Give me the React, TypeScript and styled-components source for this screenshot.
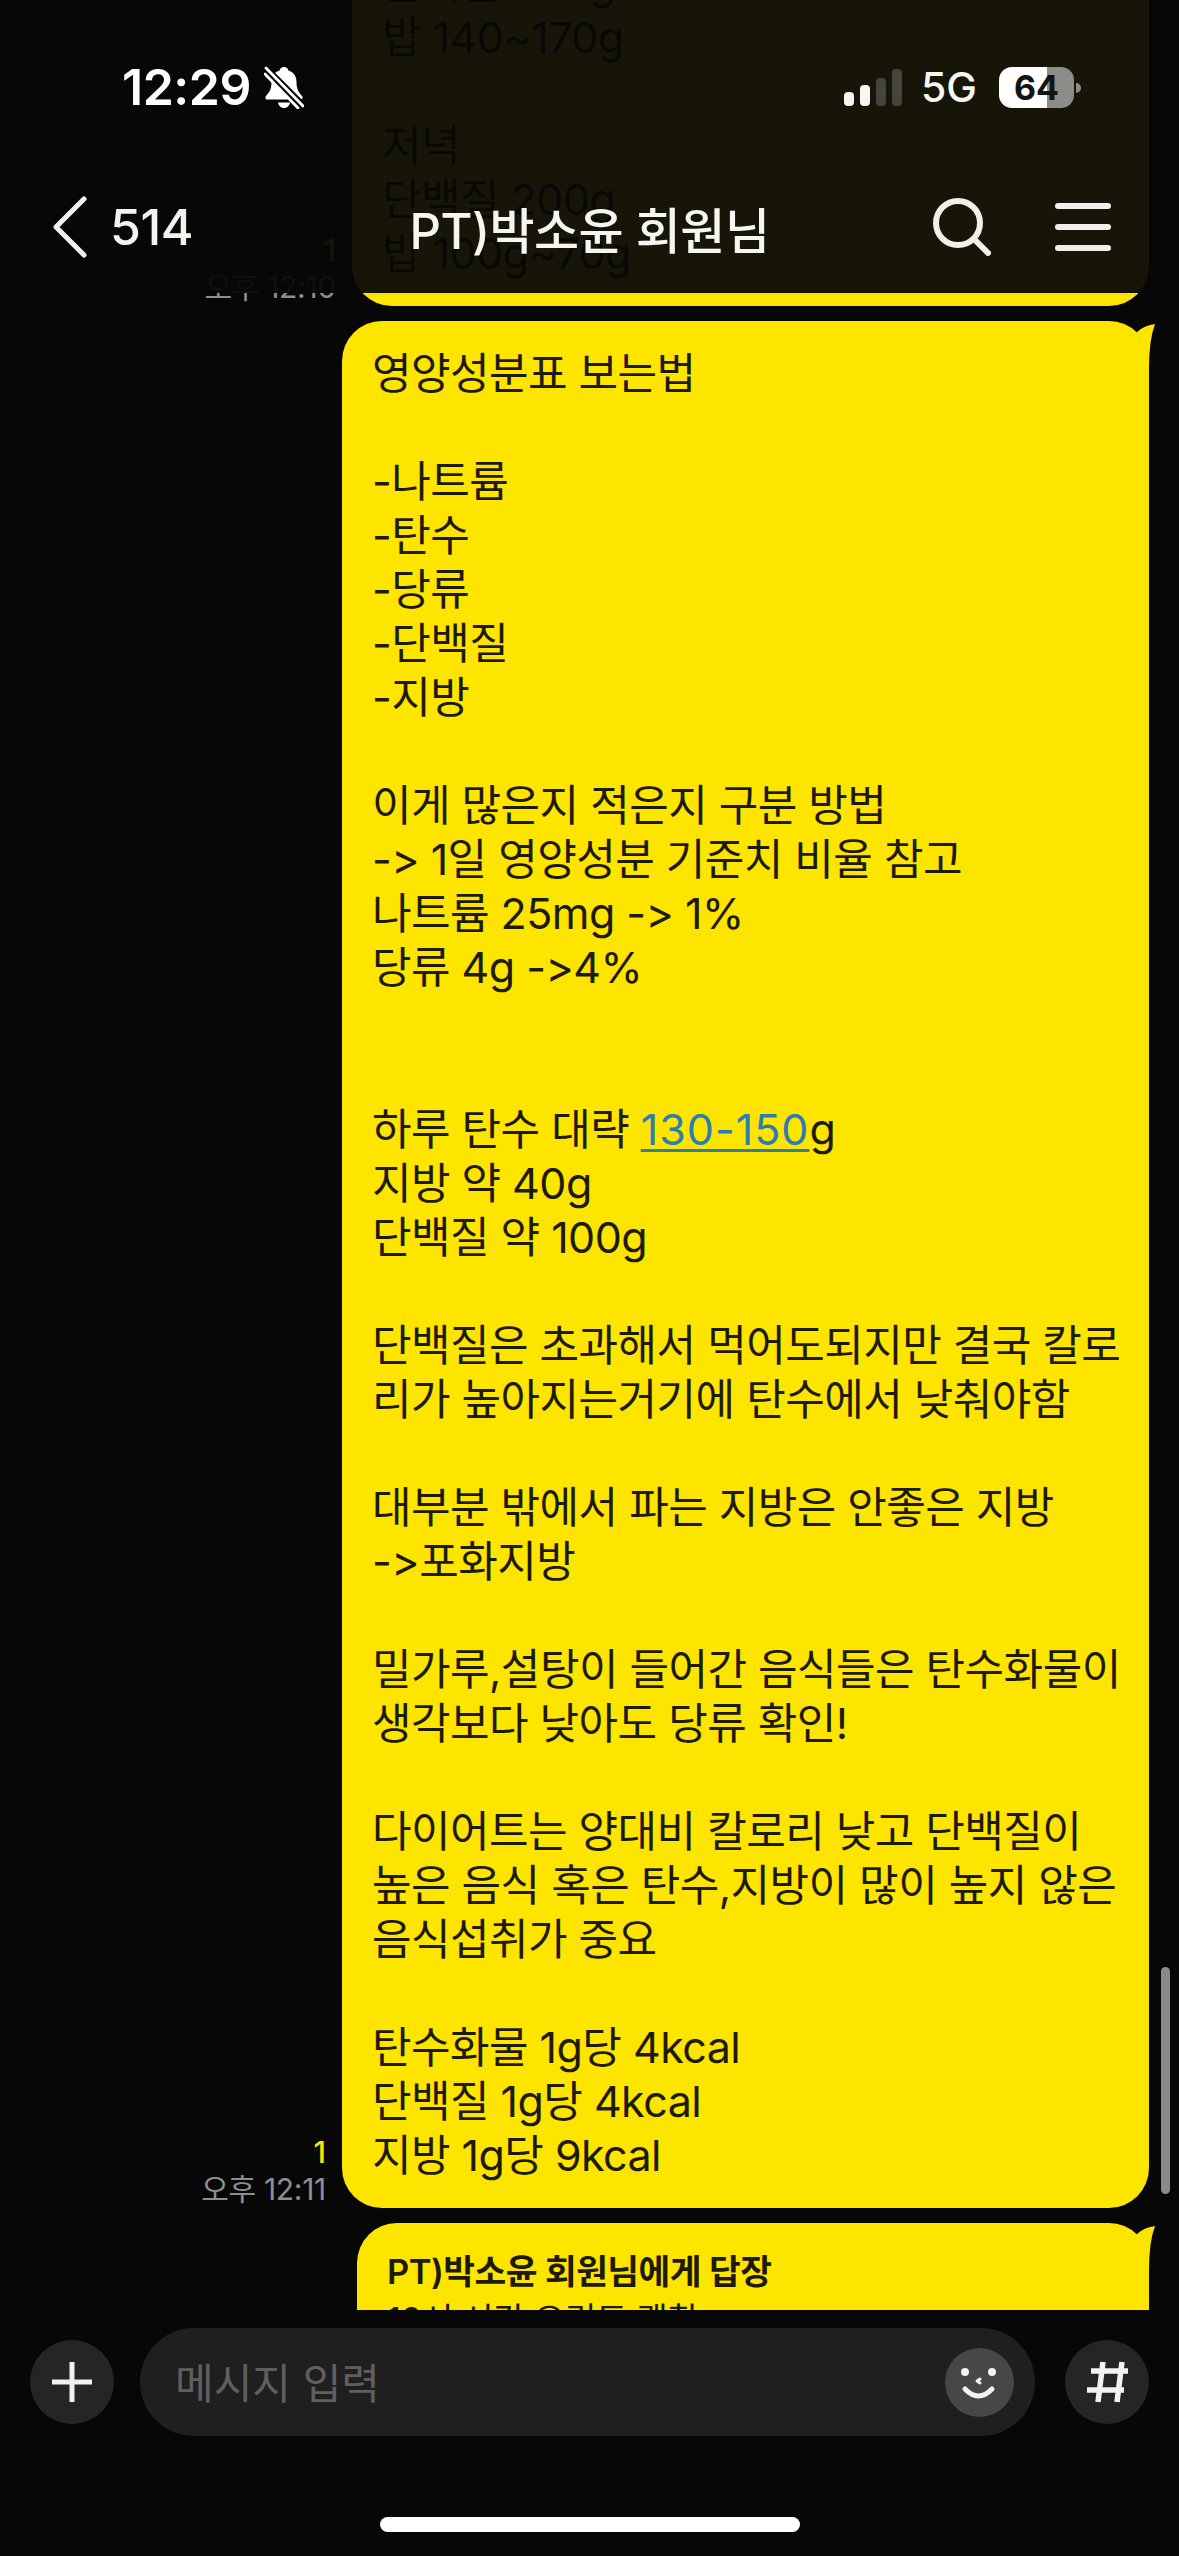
import React from 'react';
import styled, { createGlobalStyle } from 'styled-components';

const GlobalStyle = createGlobalStyle`
  html, body { margin: 0; padding: 0; background: #070707; }
  body {
    font-family: Inter, "Noto Sans CJK KR", sans-serif;
    font-feature-settings: "calt" 0;
  }
`;

const Page = styled.div`
  position: relative;
  width: 1179px;
  height: 2556px;
  overflow: hidden;
  display: flex;
  flex-direction: column;
  background: #070707;
`;

/* ---- top bar, lies over the scrolled messages ---- */
const TopOverlay = styled.header`
  position: absolute;
  top: 0;
  left: 0;
  right: 0;
  height: 293px;
  padding-top: 57px;
  box-sizing: border-box;
  background: rgba(7, 7, 7, 0.94);
  z-index: 5;
`;

const StatusBar = styled.div`
  display: flex;
  align-items: center;
  justify-content: space-between;
  height: 60px;
  padding: 0 105px 0 122px;
`;

const StatusLeft = styled.div`
  display: flex;
  align-items: center;
  gap: 13px;
`;

const Clock = styled.span`
  font-size: 50px;
  font-weight: 600;
  color: #fff;
  letter-spacing: -0.5px;
`;

const StatusRight = styled.div`
  display: flex;
  align-items: center;
`;

const SignalBars = styled.div`
  display: flex;
  align-items: flex-end;
  gap: 6px;
  height: 37px;
  margin-right: 19px;
`;

const SignalBar = styled.div<{ $h: number; $on?: boolean }>`
  width: 10px;
  height: ${p => p.$h}px;
  border-radius: 4px;
  background: ${p => (p.$on ? '#f5f5f2' : '#45453e')};
`;

const Network = styled.span`
  font-size: 41px;
  font-weight: 500;
  color: #f5f5f2;
  margin-right: 22px;
`;

const Battery = styled.div`
  position: relative;
  width: 75px;
  height: 41px;
  border-radius: 13px;
  background: linear-gradient(to right, #fff 0, #fff 48px, #8c8c88 48px);
  display: flex;
  align-items: center;
  justify-content: center;
  font-size: 34px;
  font-weight: 700;
  color: #141414;

  &::after {
    content: '';
    position: absolute;
    right: -7px;
    top: 16px;
    width: 5px;
    height: 10px;
    border-radius: 0 5px 5px 0;
    background: #8c8c88;
  }
`;

const NavBar = styled.nav`
  display: grid;
  grid-template-columns: 1fr auto 1fr;
  align-items: center;
  height: 80px;
  margin-top: 70px;
  padding: 0 68px;
  color: #f2f2ee;
`;

const BackGroup = styled.div`
  display: flex;
  align-items: center;
  gap: 23px;
  margin-left: -15px;
`;

const BackCount = styled.span`
  font-size: 50px;
  font-weight: 500;
  letter-spacing: -0.5px;
`;

const RoomTitle = styled.h1`
  margin: 0;
  font-size: 49px;
  font-weight: 500;
  color: #f5f5f2;
  white-space: nowrap;
  letter-spacing: -0.5px;
`;

const NavActions = styled.div`
  display: flex;
  align-items: center;
  justify-content: flex-end;
  gap: 64px;
`;

const MenuButton = styled.div`
  display: flex;
  flex-direction: column;
  gap: 15px;
  width: 56px;
`;

const MenuLine = styled.span`
  display: block;
  height: 6px;
  border-radius: 3px;
  background: #f0efea;
`;

/* ---- messages ---- */
const Feed = styled.main`
  position: relative;
  flex: none;
  height: 2310px;
  overflow: hidden;
  display: flex;
  flex-direction: column;
  gap: 15px;
  padding-right: 30px;
  box-sizing: border-box;
`;

const MessageRow = styled.div<{ $offset?: number }>`
  flex: none;
  display: flex;
  justify-content: flex-end;
  align-items: flex-end;
  gap: 16px;
  margin-top: ${p => p.$offset ?? 0}px;
`;

const Meta = styled.div`
  display: flex;
  flex-direction: column;
  align-items: flex-end;
`;

const Unread = styled.span`
  font-size: 30px;
  line-height: 36px;
  font-weight: 500;
  color: #fee500;
`;

const SentAt = styled.span`
  font-size: 30px;
  line-height: 38px;
  letter-spacing: -0.3px;
  color: #8e8e8e;
  white-space: nowrap;
`;

const Bubble = styled.div<{ $width: number }>`
  position: relative;
  flex: none;
  width: ${p => p.$width}px;
  box-sizing: border-box;
  padding: 25px 0 26px 30px;
  border-radius: 40px;
  background: #fee500;
  color: #1e1b04;
  font-size: 43px;
  line-height: 54px;
  letter-spacing: -0.55px;
  white-space: pre;
`;

const Tail = styled.svg`
  position: absolute;
  top: 3px;
  right: -6px;
  width: 18px;
  height: 44px;
`;

const PhoneLink = styled.span`
  color: #2a7fb0;
  letter-spacing: 1px;
  text-decoration: underline;
  text-decoration-thickness: 3px;
  text-underline-offset: 4px;
`;

const ReplyHeading = styled.div`
  font-size: 34.5px;
  line-height: 48px;
  font-weight: 600;
`;

const ReplyBody = styled.div`
  font-size: 34.5px;
  line-height: 48px;
`;

const ScrollThumb = styled.div`
  position: absolute;
  left: 1161px;
  top: 1967px;
  width: 9px;
  height: 227px;
  border-radius: 5px;
  background: #8a8a8a;
`;

/* ---- composer ---- */
const ComposerBar = styled.footer`
  flex: 1;
  display: flex;
  flex-direction: column;
  align-items: center;
  padding-top: 18px;
`;

const ComposerRow = styled.div`
  align-self: stretch;
  display: flex;
  align-items: center;
  padding: 0 30px;
`;

const RoundButton = styled.div`
  flex: none;
  width: 84px;
  height: 84px;
  border-radius: 50%;
  background: #252525;
  display: flex;
  align-items: center;
  justify-content: center;
`;

const InputField = styled.div`
  flex: 1;
  height: 108px;
  margin: 0 30px 0 26px;
  padding: 0 21px 0 35px;
  border-radius: 54px;
  background: #1f1f1f;
  display: flex;
  align-items: center;
  justify-content: space-between;
`;

const Placeholder = styled.span`
  font-size: 42px;
  color: #5f5f5f;
  margin-bottom: 4px;
`;

const EmojiButton = styled.div`
  width: 69px;
  height: 69px;
  border-radius: 50%;
  background: #474747;
`;

const HomeIndicator = styled.div`
  width: 420px;
  height: 15px;
  margin-top: 81px;
  border-radius: 8px;
  background: #fff;
`;

const BellOff = () => (
  <svg width="40" height="43" viewBox="0 0 40 43">
    <path d="M20 1c2.5 0 4 1.6 4.400 3.400C30 6 32.500 10.500 32.500 16c0 7 2 10 5.500 14 1.300 1.500.5 3.500-1.500 3.500H3.500C1.500 33.500.7 31.500 2 30c3.500-4 5.500-7 5.500-14C7.500 10.500 10 6 15.600 4.400 16 2.600 17.500 1 20 1z" fill="#fff" />
    <path d="M14 36.500h12c-.6 3.300-3 5.500-6 5.500s-5.400-2.200-6-5.500z" fill="#fff" />
    <path d="M1 3l38 38" stroke="#070707" strokeWidth="9" />
    <path d="M2 2l37 38M1 8l33 34" stroke="#fff" strokeWidth="2.800" strokeLinecap="round" />
  </svg>
);

const BubbleTail = () => (
  <Tail viewBox="0 0 18 44">
    <path d="M0 8Q8 1 18 0 12 16 12 44H0Z" fill="#fee500" />
  </Tail>
);

const signal = [
  { h: 14, on: true },
  { h: 21, on: true },
  { h: 28, on: false },
  { h: 37, on: false },
];

const App = () => (
  <>
    <GlobalStyle />
    <Page>
      <TopOverlay>
        <StatusBar>
          <StatusLeft>
            <Clock>12:29</Clock>
            <BellOff />
          </StatusLeft>
          <StatusRight>
            <SignalBars>
              {signal.map((s, i) => (
                <SignalBar key={i} $h={s.h} $on={s.on} />
              ))}
            </SignalBars>
            <Network>5G</Network>
            <Battery>64</Battery>
          </StatusRight>
        </StatusBar>
        <NavBar>
          <BackGroup>
            <svg width="34" height="62" viewBox="0 0 34 62" fill="none">
              <path d="M31 3L3 31l28 28" stroke="#f2f2ee" strokeWidth="5" strokeLinecap="round" strokeLinejoin="round" />
            </svg>
            <BackCount>514</BackCount>
          </BackGroup>
          <RoomTitle>PT)박소윤 회원님</RoomTitle>
          <NavActions>
            <svg width="58" height="58" viewBox="0 0 58 58" fill="none">
              <circle cx="25" cy="25" r="22" stroke="#f0efea" strokeWidth="6" />
              <path d="M41 41l14 14" stroke="#f0efea" strokeWidth="6" strokeLinecap="round" />
            </svg>
            <MenuButton>
              <MenuLine />
              <MenuLine />
              <MenuLine />
            </MenuButton>
          </NavActions>
        </NavBar>
      </TopOverlay>

      <Feed>
        <MessageRow $offset={-69}>
          <Meta>
            <Unread>1</Unread>
            <SentAt>오후 12:10</SentAt>
          </Meta>
          <Bubble $width={797}>
            {`단백질 200g
밥 140~170g

저녁
단백질 200g
밥 100g~70g`}
          </Bubble>
        </MessageRow>

        <MessageRow>
          <Meta>
            <Unread>1</Unread>
            <SentAt>오후 12:11</SentAt>
          </Meta>
          <Bubble $width={807}>
            <BubbleTail />
            {`영양성분표 보는법

-나트륨
-탄수
-당류
-단백질
-지방

이게 많은지 적은지 구분 방법
-> 1일 영양성분 기준치 비율 참고
나트륨 25mg -> 1%
당류 4g ->4%


하루 탄수 대략 `}
            <PhoneLink>130-150</PhoneLink>
            {`g
지방 약 40g
단백질 약 100g

단백질은 초과해서 먹어도되지만 결국 칼로
리가 높아지는거기에 탄수에서 낮춰야함

대부분 밖에서 파는 지방은 안좋은 지방
->포화지방

밀가루,설탕이 들어간 음식들은 탄수화물이
생각보다 낮아도 당류 확인!

다이어트는 양대비 칼로리 낮고 단백질이
높은 음식 혹은 탄수,지방이 많이 높지 않은
음식섭취가 중요

탄수화물 1g당 4kcal
단백질 1g당 4kcal
지방 1g당 9kcal`}
          </Bubble>
        </MessageRow>

        <MessageRow>
          <Bubble $width={792}>
            <BubbleTail />
            <ReplyHeading>PT)박소윤 회원님에게 답장</ReplyHeading>
            <ReplyBody>10시 시간 오리도 괜찮</ReplyBody>
          </Bubble>
        </MessageRow>

        <ScrollThumb />
      </Feed>

      <ComposerBar>
        <ComposerRow>
          <RoundButton>
            <svg width="42" height="42" viewBox="0 0 42 42">
              <path d="M21 1v40M1 21h40" stroke="#f0f0f0" strokeWidth="5" />
            </svg>
          </RoundButton>
          <InputField>
            <Placeholder>메시지 입력</Placeholder>
            <EmojiButton>
              <svg width="69" height="69" viewBox="0 0 69 69" fill="none">
                <circle cx="20" cy="24" r="4" fill="#f2f2f2" />
                <circle cx="47" cy="24" r="4" fill="#f2f2f2" />
                <path d="M35 31l-3 2 3 2" stroke="#f2f2f2" strokeWidth="3" strokeLinecap="round" strokeLinejoin="round" />
                <path d="M20 41Q33.500 55 47 41" stroke="#f2f2f2" strokeWidth="5" strokeLinecap="round" />
              </svg>
            </EmojiButton>
          </InputField>
          <RoundButton>
            <svg width="44" height="44" viewBox="0 0 44 44" fill="none">
              <path d="M18 2L13 42M37 2L32 42M6 11H43M2 30H39" stroke="#f2f2f2" strokeWidth="5.500" />
            </svg>
          </RoundButton>
        </ComposerRow>
        <HomeIndicator />
      </ComposerBar>
    </Page>
  </>
);

export default App;
